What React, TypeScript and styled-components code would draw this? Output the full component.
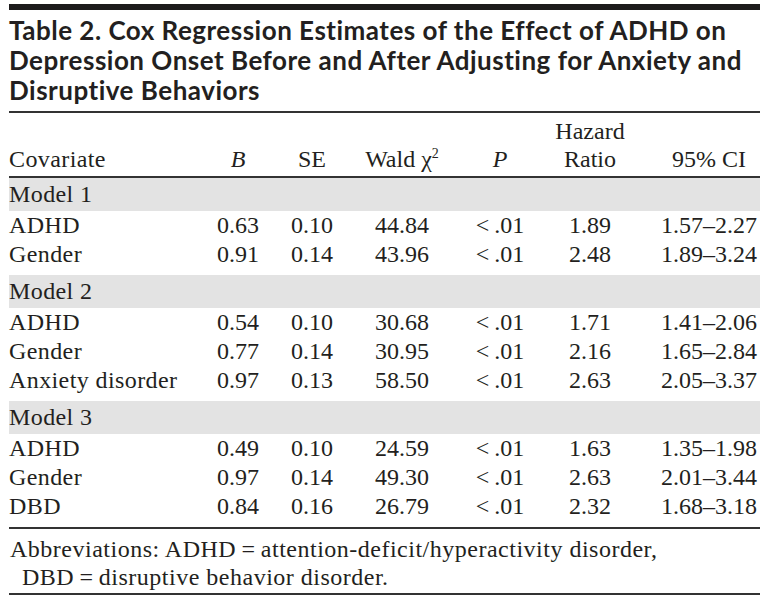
import styled, { createGlobalStyle } from 'styled-components';

const GlobalStyle = createGlobalStyle`
  body {
    margin: 0;
    background: #ffffff;
  }
`;

const COLUMNS = '191px 76px 72px 108px 88px 116px 98px';

type Row = [string, string, string, string, string, string, string];

const GROUPS: { label: string; rows: Row[] }[] = [
  {
    label: 'Model 1',
    rows: [
      ['ADHD', '0.63', '0.10', '44.84', '<\u2009.01', '1.89', '1.57–2.27'],
      ['Gender', '0.91', '0.14', '43.96', '<\u2009.01', '2.48', '1.89–3.24'],
    ],
  },
  {
    label: 'Model 2',
    rows: [
      ['ADHD', '0.54', '0.10', '30.68', '<\u2009.01', '1.71', '1.41–2.06'],
      ['Gender', '0.77', '0.14', '30.95', '<\u2009.01', '2.16', '1.65–2.84'],
      ['Anxiety disorder', '0.97', '0.13', '58.50', '<\u2009.01', '2.63', '2.05–3.37'],
    ],
  },
  {
    label: 'Model 3',
    rows: [
      ['ADHD', '0.49', '0.10', '24.59', '<\u2009.01', '1.63', '1.35–1.98'],
      ['Gender', '0.97', '0.14', '49.30', '<\u2009.01', '2.63', '2.01–3.44'],
      ['DBD', '0.84', '0.16', '26.79', '<\u2009.01', '2.32', '1.68–3.18'],
    ],
  },
];

const Page = styled.div`
  width: 751px;
  padding: 4px 0 0 9px;
  color: #231f20;
`;

const TopRule = styled.div`
  height: 6px;
  background: #1d1b1c;
`;

const Title = styled.h1`
  margin: 5px 0 0;
  padding-bottom: 6px;
  border-bottom: 2px solid #333333;
  font-family: Lato, 'Open Sans', sans-serif;
  font-weight: 700;
  font-size: 26px;
  letter-spacing: 0.5px;
  line-height: 30px;
  color: #231f20;
`;

const Table = styled.div`
  font-family: 'Liberation Serif', 'Times New Roman', serif;
  font-size: 24px;
  border-bottom: 2px solid #333333;
`;

const GridRow = styled.div`
  display: grid;
  grid-template-columns: ${COLUMNS};
  & > :nth-child(6) {
    padding-right: 24px;
  }
`;

const HeaderRow = styled(GridRow)`
  height: 65px;
  align-items: end;
  line-height: 28px;
  padding-bottom: 3px;
  box-sizing: border-box;
  border-bottom: 2px solid #333333;
`;

const DataRow = styled(GridRow)`
  height: 29px;
  line-height: 29px;
`;

const Cell = styled.div<{ $first?: boolean }>`
  text-align: ${(p) => (p.$first ? 'left' : 'center')};
  letter-spacing: ${(p) => (p.$first ? '0.4px' : '0')};
  white-space: nowrap;
`;

const Italic = styled.i`
  font-style: italic;
`;

const Sup = styled.sup`
  font-size: 14px;
  line-height: 0;
  vertical-align: 9px;
`;

const Group = styled.div`
  padding-bottom: 6px;
`;

const Band = styled.div`
  height: 33px;
  line-height: 33px;
  letter-spacing: 0.4px;
  background: #e3e3e3;
`;

const Footnote = styled.p`
  margin: 0;
  padding: 6px 0 2px 1px;
  border-bottom: 2px solid #333333;
  font-family: 'Liberation Serif', 'Times New Roman', serif;
  font-size: 24px;
  letter-spacing: 0.5px;
  line-height: 28px;
`;

const Indent = styled.span`
  display: block;
  padding-left: 12px;
`;

export default function App() {
  return (
    <>
      <GlobalStyle />
      <Page>
        <TopRule />
        <Title>
          Table 2. Cox Regression Estimates of the Effect of ADHD on
          <br />
          Depression Onset Before and After Adjusting for Anxiety and
          <br />
          Disruptive Behaviors
        </Title>
        <Table>
          <HeaderRow>
            <Cell $first>Covariate</Cell>
            <Cell>
              <Italic>B</Italic>
            </Cell>
            <Cell>SE</Cell>
            <Cell>
              Wald χ<Sup>2</Sup>
            </Cell>
            <Cell>
              <Italic>P</Italic>
            </Cell>
            <Cell>
              Hazard
              <br />
              Ratio
            </Cell>
            <Cell>95% CI</Cell>
          </HeaderRow>
          {GROUPS.map((g) => (
            <Group key={g.label}>
              <Band>{g.label}</Band>
              {g.rows.map((r) => (
                <DataRow key={r[0]}>
                  {r.map((v, i) => (
                    <Cell key={i} $first={i === 0}>
                      {v}
                    </Cell>
                  ))}
                </DataRow>
              ))}
            </Group>
          ))}
        </Table>
        <Footnote>
          Abbreviations: ADHD{'\u2009'}={'\u2009'}attention-deficit/hyperactivity disorder,
          <Indent>DBD{'\u2009'}={'\u2009'}disruptive behavior disorder.</Indent>
        </Footnote>
      </Page>
    </>
  );
}
